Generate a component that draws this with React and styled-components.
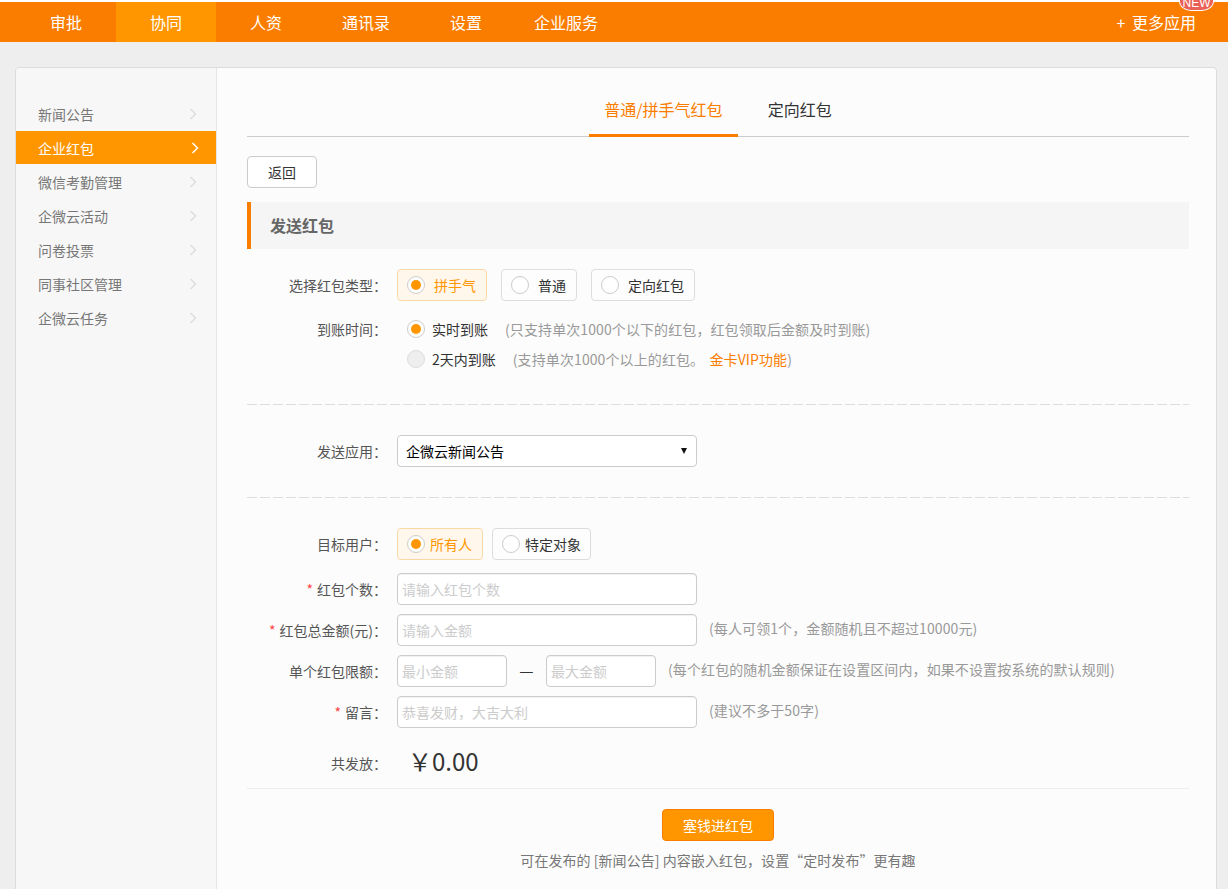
import React from 'react';
import styled, { createGlobalStyle } from 'styled-components';

const Global = createGlobalStyle`
  html, body { margin: 0; padding: 0; height: 889px; overflow: hidden; background: #eeeeee; }
  body { font-family: "Noto Sans CJK SC", "Liberation Sans", sans-serif; font-size: 14px; color: #333; }
  * { box-sizing: border-box; }
`;

const Page = styled.div`
  height: 889px;
  overflow: hidden;
  padding-top: 2px;
  position: relative;
  background: linear-gradient(#fff 0, #fff 2px, #eeeeee 2px);
`;
const TopBar = styled.header`
  height: 40px;
  background: #fb7d00;
  display: flex;
  padding-left: 16px;
  padding-right: 32px;
  color: #fff;
  font-size: 16px;
  position: relative;
`;
const TopItem = styled.div`
  width: 100px;
  line-height: 40px;
  text-align: center;
  background: ${p => (p.$active ? '#ff9600' : 'transparent')};
`;
const MoreApps = styled.div`
  margin-left: auto;
  line-height: 40px;
  position: relative;
`;
const Plus = styled.span`
  margin-right: 3px;
`;
const NewBadge = styled.span`
  position: absolute;
  right: -18px;
  top: -12px;
  width: 35px;
  height: 21px;
  padding-top: 6px;
  border-radius: 0 0 12px 12px / 0 0 10px 10px;
  background: #ea5f57;
  border: 1px solid #fff;
  border-top: none;
  color: #fff;
  font-size: 12px;
  line-height: 14px;
  text-align: center;
  font-family: "Liberation Sans", sans-serif;
`;
const Card = styled.div`
  margin: 25px 0 0 15px;
  width: 1202px;
  height: 900px;
  display: flex;
  background: #fcfcfc;
  border: 1px solid #dcdcdc;
  border-radius: 4px;
`;
const Sidebar = styled.nav`
  width: 201px;
  flex: none;
  padding-top: 29px;
  background: #f7f7f7;
  border-right: 1px solid #e6e6e6;
  border-radius: 4px 0 0 4px;
`;
const SideItem = styled.div`
  height: 33px;
  margin-bottom: 1px;
  padding: 1px 19px 0 22px;
  display: flex;
  align-items: center;
  justify-content: space-between;
  font-size: 14px;
  background: ${p => (p.$active ? '#ff9600' : 'transparent')};
  color: ${p => (p.$active ? '#fff' : '#777')};
`;
const Main = styled.main`
  flex: 1;
  padding: 0 27px 0 30px;
`;
const TabBar = styled.div`
  height: 69px;
  display: flex;
  justify-content: center;
  align-items: flex-end;
  border-bottom: 1px solid #ccc;
`;
const Tab = styled.div`
  height: 51px;
  padding: 0 15px;
  margin-bottom: -1px;
  margin-left: ${p => (p.$next ? '15px' : '0')};
  line-height: 47px;
  font-size: 16px;
  color: ${p => (p.$active ? '#fb7d00' : '#333')};
  border-bottom: 3px solid ${p => (p.$active ? '#fb7d00' : 'transparent')};
`;
const BackButton = styled.button`
  display: block;
  margin-top: 19px;
  width: 70px;
  height: 32px;
  background: #fff;
  border: 1px solid #ccc;
  border-radius: 4px;
  font: inherit;
  color: #333;
  padding: 0;
`;
const SectionHead = styled.h2`
  margin: 14px 0 0;
  height: 47px;
  line-height: 47px;
  padding-left: 19px;
  border-left: 4px solid #fb7d00;
  background: #f5f5f5;
  color: #666;
  font-size: 16px;
  font-weight: 700;
`;
const Row = styled.div`
  display: flex;
  align-items: ${p => (p.$top ? 'flex-start' : 'center')};
  margin-top: ${p => p.$mt || 9}px;
  min-height: ${p => p.$h || 32}px;
`;
const Label = styled.label`
  width: 140px;
  flex: none;
  margin-right: 10px;
  margin-top: ${p => p.$down || 0}px;
  text-align: right;
  color: #555;
  line-height: ${p => (p.$lh ? `${p.$lh}px` : 'normal')};
`;
const Star = styled.span`
  color: #f44;
  margin-right: 4px;
`;
const Options = styled.div`
  display: flex;
  gap: ${p => p.$gap}px;
`;
const OptionBox = styled.div`
  height: 32px;
  display: flex;
  align-items: center;
  gap: ${p => p.$gap}px;
  padding: 0 ${p => p.$pr}px 0 9px;
  border-radius: 4px;
  border: 1px solid ${p => (p.$on ? '#fbd9a5' : '#ddd')};
  background: ${p => (p.$on ? '#fff7ec' : '#fdfdfd')};
  color: ${p => (p.$on ? '#ff9600' : '#333')};
`;
const Radio = styled.span`
  width: 18px;
  height: 18px;
  flex: none;
  border-radius: 50%;
  border: 1px solid ${p => (p.$disabled ? '#ddd' : '#ccc')};
  background: ${p => (p.$disabled ? '#eee' : '#fff')};
  display: flex;
  align-items: center;
  justify-content: center;
  &::after {
    content: "";
    display: ${p => (p.$on ? 'block' : 'none')};
    width: 10px;
    height: 10px;
    border-radius: 50%;
    background: #ff9600;
  }
`;
const TimeList = styled.div`
  display: flex;
  flex-direction: column;
  gap: 10px;
  padding-left: 10px;
`;
const TimeLine = styled.div`
  display: flex;
  align-items: center;
  height: 20px;
`;
const TimeName = styled.span`
  margin-left: 7px;
  margin-right: ${p => p.$mr}px;
  color: #333;
`;
const Hint = styled.span`
  color: #999;
  letter-spacing: 0.1px;
  margin-left: ${p => p.$ml || 0}px;
  margin-bottom: ${p => p.$up || 0}px;
`;
const Link = styled.span`
  color: #fb7d00;
  margin-left: 2px;
`;
const Dashed = styled.div`
  height: 1px;
  margin-top: ${p => p.$mt}px;
  background: repeating-linear-gradient(90deg, #ddd 0, #ddd 10px, transparent 10px, transparent 13px);
`;
const SelectWrap = styled.div`
  position: relative;
  width: 300px;
  height: 32px;
  &::after {
    content: "";
    position: absolute;
    right: 10px;
    top: 13px;
    border-left: 3px solid transparent;
    border-right: 3px solid transparent;
    border-top: 6px solid #111;
    pointer-events: none;
  }
`;
const Select = styled.select`
  width: 100%;
  height: 32px;
  padding: 0 8px;
  appearance: none;
  font: inherit;
  color: #000;
  background: #fff;
  border: 1px solid #ccc;
  border-radius: 4px;
  outline: none;
`;
const Input = styled.input`
  width: ${p => p.$w || 300}px;
  height: 32px;
  padding: 0 4px;
  font: inherit;
  background: #fff;
  border: 1px solid #ccc;
  border-radius: 4px;
  box-shadow: inset 0 1px 1px rgba(0, 0, 0, 0.06);
  outline: none;
  &::placeholder { color: #ccc; opacity: 1; }
`;
const Dash = styled.span`
  width: 39px;
  text-align: center;
  color: #333;
  font-size: 16px;
  margin-bottom: 3px;
`;
const Total = styled.span`
  font-size: 24px;
  color: #333;
  margin-left: 11px;
  line-height: 32px;
`;
const Divider = styled.div`
  border-top: 1px solid #eee;
  margin-top: 11px;
`;
const Submit = styled.button`
  display: block;
  margin: 20px auto 0;
  width: 112px;
  height: 32px;
  background: #ff9600;
  border: 1px solid #fb7d00;
  border-radius: 4px;
  color: #fff;
  font: inherit;
  padding: 0;
`;
const Note = styled.p`
  margin: 9px 0 0;
  text-align: center;
  color: #777;
  line-height: 20px;
  letter-spacing: 0.05px;
`;
const ChevronSvg = styled.svg`
  flex: none;
  margin-right: ${p => (p.$light ? '-2px' : '0')};
`;

const Chevron = ({ light }) => (
  <ChevronSvg $light={light} width="8" height="12" viewBox="0 0 8 12" fill="none" stroke={light ? '#fff' : '#ddd'} strokeWidth="1.5">
    <path d="M1.5 1 6.5 6 1.5 11" />
  </ChevronSvg>
);

const side = ['新闻公告', '企业红包', '微信考勤管理', '企微云活动', '问卷投票', '同事社区管理', '企微云任务'];
const top = ['审批', '协同', '人资', '通讯录', '设置', '企业服务'];

export default function App() {
  return (
    <Page>
      <Global />
      <TopBar>
        {top.map((t, i) => <TopItem key={t} $active={i === 1}>{t}</TopItem>)}
        <MoreApps><Plus>+</Plus> 更多应用<NewBadge>NEW</NewBadge></MoreApps>
      </TopBar>
      <Card>
        <Sidebar>
          {side.map((s, i) => (
            <SideItem key={s} $active={i === 1}>{s}<Chevron light={i === 1} /></SideItem>
          ))}
        </Sidebar>
        <Main>
          <TabBar>
            <Tab $active>普通/拼手气红包</Tab>
            <Tab $next>定向红包</Tab>
          </TabBar>
          <BackButton>返回</BackButton>
          <SectionHead>发送红包</SectionHead>
          <Row $mt={20}>
            <Label>选择红包类型：</Label>
            <Options $gap={14}>
              <OptionBox $on $gap={9} $pr={10}><Radio $on />拼手气</OptionBox>
              <OptionBox $gap={9} $pr={10}><Radio />普通</OptionBox>
              <OptionBox $gap={9} $pr={10}><Radio />定向红包</OptionBox>
            </Options>
          </Row>
          <Row $mt={18} $top>
            <Label $lh={20}>到账时间：</Label>
            <TimeList>
              <TimeLine>
                <Radio $on /><TimeName $mr={17}>实时到账</TimeName>
                <Hint>(只支持单次1000个以下的红包，红包领取后金额及时到账)</Hint>
              </TimeLine>
              <TimeLine>
                <Radio $disabled /><TimeName $mr={17}>2天内到账</TimeName>
                <Hint>(支持单次1000个以上的红包。 <Link>金卡VIP功能</Link>)</Hint>
              </TimeLine>
            </TimeList>
          </Row>
          <Dashed $mt={35} />
          <Row $mt={30}>
            <Label>发送应用：</Label>
            <SelectWrap>
              <Select defaultValue="a"><option value="a">企微云新闻公告</option></Select>
            </SelectWrap>
          </Row>
          <Dashed $mt={30} />
          <Row $mt={30}>
            <Label>目标用户：</Label>
            <Options $gap={9}>
              <OptionBox $on $gap={5} $pr={10}><Radio $on />所有人</OptionBox>
              <OptionBox $gap={5} $pr={9}><Radio />特定对象</OptionBox>
            </Options>
          </Row>
          <Row $mt={13}>
            <Label><Star>*</Star>红包个数：</Label>
            <Input placeholder="请输入红包个数" />
          </Row>
          <Row>
            <Label><Star>*</Star>红包总金额(元)：</Label>
            <Input placeholder="请输入金额" />
            <Hint $ml={12} $up={4}>(每人可领1个，金额随机且不超过10000元)</Hint>
          </Row>
          <Row>
            <Label>单个红包限额：</Label>
            <Input $w={110} placeholder="最小金额" />
            <Dash>—</Dash>
            <Input $w={110} placeholder="最大金额" />
            <Hint $ml={12} $up={4}>(每个红包的随机金额保证在设置区间内，如果不设置按系统的默认规则)</Hint>
          </Row>
          <Row>
            <Label><Star>*</Star>留言：</Label>
            <Input placeholder="恭喜发财，大吉大利" />
            <Hint $ml={12} $up={4}>(建议不多于50字)</Hint>
          </Row>
          <Row $mt={17}>
            <Label $down={4}>共发放：</Label>
            <Total>￥0.00</Total>
          </Row>
          <Divider />
          <Submit>塞钱进红包</Submit>
          <Note>可在发布的 [新闻公告] 内容嵌入红包，设置“定时发布”更有趣</Note>
        </Main>
      </Card>
    </Page>
  );
}
